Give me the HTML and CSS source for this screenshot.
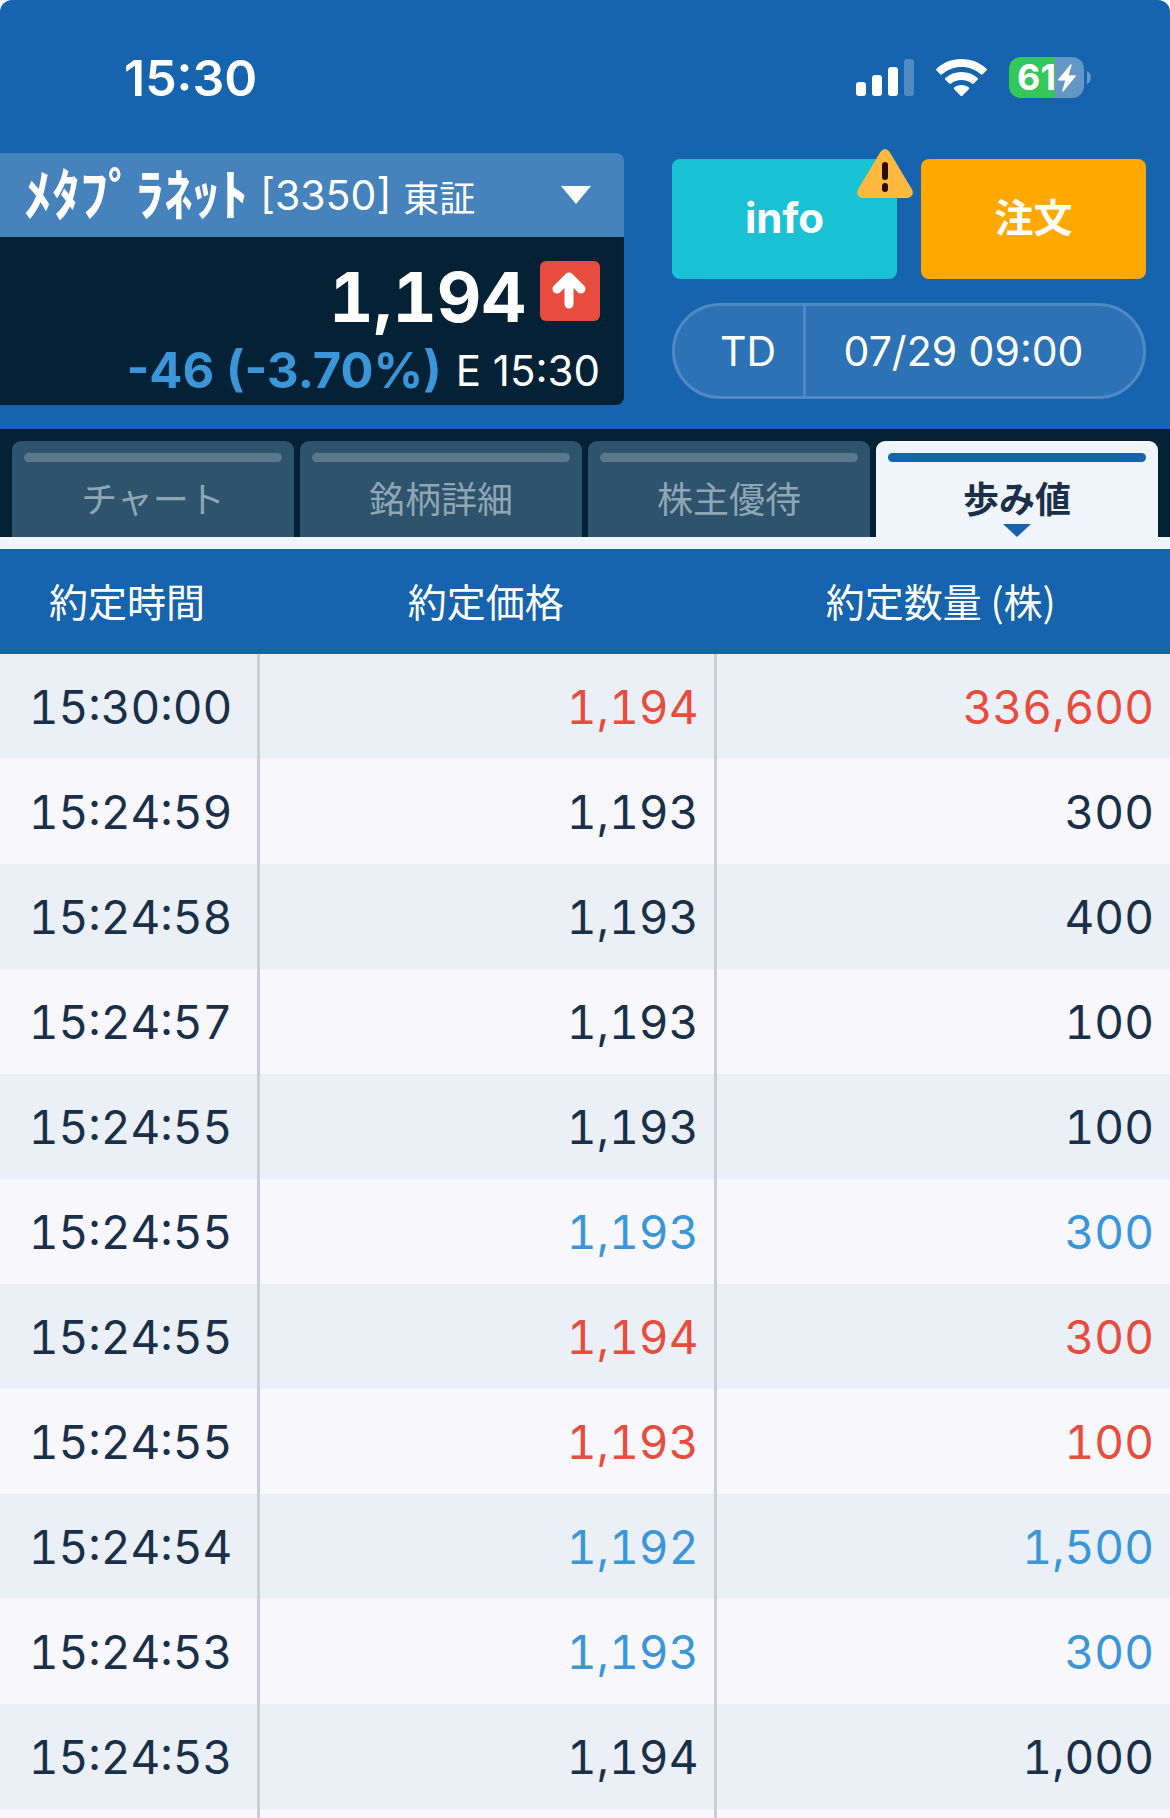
FILE: index.html
```html
<!DOCTYPE html>
<html lang="ja">
<head>
<meta charset="utf-8">
<meta name="viewport" content="width=device-width, initial-scale=1">
<title>歩み値</title>
<link rel="stylesheet" href="styles.css">
</head>
<body>
<div class="app">
  <div class="status">
    <span class="clock">15:30</span>
    <div class="status-icons">
      <svg class="signal" width="58" height="38" viewBox="0 0 58 38" aria-hidden="true">
        <rect x="0" y="23" width="10" height="14" rx="3"/>
        <rect x="16" y="16" width="10" height="21" rx="3"/>
        <rect x="32" y="8" width="10" height="29" rx="3"/>
        <rect x="48" y="0" width="10" height="37" rx="3" opacity=".25"/>
      </svg>
      <svg class="wifi" width="51" height="38" viewBox="0 0 51 38" aria-hidden="true">
        <path d="M25.500 0C35.500 0 44 3.700 50.500 9.700Q51.400 10.600 50.500 11.500L46.700 15.300Q45.900 16.100 45 15.300C39.600 10.600 33 8 25.500 8S11.400 10.600 6 15.300Q5.100 16.100 4.300 15.300L.5 11.500Q-.4 10.600.5 9.700C7 3.700 15.500 0 25.500 0Z"/>
        <path d="M25.500 13C31.800 13 37.400 15.200 41.600 19Q42.500 19.900 41.600 20.800L37.700 24.600Q36.900 25.300 36 24.600C33.200 22.300 29.600 21 25.500 21S17.800 22.300 15 24.600Q14.100 25.300 13.300 24.600L9.400 20.800Q8.500 19.900 9.400 19C13.600 15.200 19.200 13 25.500 13Z"/>
        <path d="M25.500 26C28.400 26 31 27 32.800 28.500Q33.700 29.300 32.800 30.200L26.400 36.700Q25.500 37.500 24.600 36.700L18.200 30.200Q17.300 29.300 18.200 28.500C20 27 22.600 26 25.500 26Z"/>
      </svg>
      <div class="battery">
        <div class="battery-body">
          <span>61</span>
          <svg width="18" height="28" viewBox="0 0 18 28" aria-hidden="true"><path d="M12.500.5 0 15.500Q-.3 16.300.6 16.400H7.300L4.200 26.700Q4.400 28 5.500 27.300L17.800 12.300Q18.200 11.300 17.300 11.200H10.600L13.700 1.200Q13.500-.2 12.500.5Z"/></svg>
        </div>
        <svg width="4" height="13" viewBox="0 0 4 13" aria-hidden="true"><path d="M0 0C5 2 5 11 0 13Z" opacity=".35"/></svg>
      </div>
    </div>
  </div>

  <header class="top">
    <section class="quote">
      <button class="issue" type="button" aria-haspopup="listbox">
        <span class="issue-name">ﾒﾀﾌﾟﾗﾈｯﾄ</span>
        <span class="issue-code">[3350]</span>
        <span class="issue-market">東証</span>
        <svg class="issue-caret" width="30" height="18" viewBox="0 0 30 18" aria-hidden="true"><path d="M0 0H30L15 18Z"/></svg>
      </button>
      <div class="price-box">
        <div class="price-line">
          <strong class="price">1,194</strong>
          <span class="tick"><svg width="36" height="38" viewBox="0 0 36 38" aria-label="上昇"><path d="M17 32V6M5 17 17 5 29 17"/></svg></span>
        </div>
        <div class="change-line">
          <strong class="change">-46 (-3.70%)</strong>
          <span class="price-time">E 15:30</span>
        </div>
      </div>
    </section>
    <section class="actions">
      <div class="buttons">
        <button class="btn btn-info" type="button">info
          <svg class="warn" width="56" height="49" viewBox="0 0 56 49" aria-hidden="true">
            <path class="warn-bg" d="M23.500 2.700Q28-2.600 32.500 2.700L55.300 41Q57.500 47.500 50.500 49H5.500Q-1.500 47.500.7 41Z"/>
            <rect x="25" y="13" width="6" height="18" rx="3"/>
            <rect x="25" y="34" width="6" height="9" rx="3"/>
          </svg>
        </button>
        <button class="btn btn-order" type="button">注文</button>
      </div>
      <button class="session" type="button">
        <span class="session-type">TD</span>
        <span class="session-time">07/29 09:00</span>
      </button>
    </section>
  </header>

  <nav class="tabs">
    <a class="tab" href="#chart">チャート</a>
    <a class="tab" href="#detail">銘柄詳細</a>
    <a class="tab" href="#benefit">株主優待</a>
    <a class="tab tab-active" href="#ticks" aria-current="page">歩み値</a>
  </nav>

  <main class="ticks" id="ticks">
    <table>
      <colgroup><col class="col-time"><col class="col-price"><col class="col-volume"></colgroup>
      <thead>
        <tr><th scope="col">約定時間</th><th scope="col">約定価格</th><th scope="col">約定数量 (株)</th></tr>
      </thead>
      <tbody>
        <tr class="up"><td>15:30:00</td><td>1,194</td><td>336,600</td></tr>
        <tr><td>15:24:59</td><td>1,193</td><td>300</td></tr>
        <tr><td>15:24:58</td><td>1,193</td><td>400</td></tr>
        <tr><td>15:24:57</td><td>1,193</td><td>100</td></tr>
        <tr><td>15:24:55</td><td>1,193</td><td>100</td></tr>
        <tr class="down"><td>15:24:55</td><td>1,193</td><td>300</td></tr>
        <tr class="up"><td>15:24:55</td><td>1,194</td><td>300</td></tr>
        <tr class="up"><td>15:24:55</td><td>1,193</td><td>100</td></tr>
        <tr class="down"><td>15:24:54</td><td>1,192</td><td>1,500</td></tr>
        <tr class="down"><td>15:24:53</td><td>1,193</td><td>300</td></tr>
        <tr><td>15:24:53</td><td>1,194</td><td>1,000</td></tr>
        <tr><td></td><td></td><td></td></tr>
      </tbody>
    </table>
  </main>
</div>
</body>
</html>
```
FILE: styles.css
```css
:root {
  --blue: #1664ad;
  --navy: #042135;
  --ink: #1a3048;
  --up: #e74c3c;
  --down: #3a96d8;
  --pale: #f0f5fc;
}

* { box-sizing: border-box; }

body {
  margin: 0;
  background: #fff;
  color: var(--ink);
  font-family: Inter, "Noto Sans CJK JP", sans-serif;
}

button {
  margin: 0;
  padding: 0;
  border: 0;
  color: #fff;
  font: inherit;
  cursor: pointer;
}

svg { display: block; flex: none; }

.app {
  display: flex;
  flex-direction: column;
  height: 100vh;
  overflow: hidden;
  border-radius: 12px 12px 0 0;
  background: var(--pale);
}

/* Status bar */
.status {
  display: flex;
  flex: none;
  align-items: center;
  justify-content: space-between;
  height: 153px;
  padding: 2px 79px 0 124px;
  background: var(--blue);
  color: #fff;
}

.clock { font-size: 50px; font-weight: 600; }

.status-icons { display: flex; align-items: center; gap: 22px; }
.status-icons svg { fill: #fff; }

.battery { display: flex; align-items: center; gap: 3px; }

.battery-body {
  display: flex;
  align-items: center;
  justify-content: center;
  gap: 2px;
  width: 75px;
  height: 41px;
  border-radius: 12px;
  background: linear-gradient(90deg, #34c759 62%, #6496c8 62%);
  font-size: 36px;
  font-weight: 700;
  line-height: 41px;
}

/* Quote header */
.top {
  display: flex;
  flex: none;
  gap: 48px;
  padding: 0 24px 24px 0;
  background: var(--blue);
}

.quote {
  flex: 624;
  overflow: hidden;
  border-radius: 0 8px 8px 0;
  color: #fff;
}

.issue {
  display: flex;
  align-items: center;
  gap: 12px;
  width: 100%;
  height: 84px;
  padding: 0 33px 0 24px;
  background: #4682bb;
  white-space: nowrap;
}

.issue-name { font-size: 56px; font-weight: 700; line-height: 84px; }
.issue-code { font-size: 41px; }
.issue-market { padding-top: 8px; font-size: 36px; line-height: 76px; }
.issue-caret { margin-left: auto; fill: #fff; }

.price-box {
  height: 168px;
  padding: 24px 24px 0;
  background: var(--navy);
}

.price-line,
.change-line {
  display: flex;
  justify-content: flex-end;
  gap: 14px;
}

.price-line { align-items: center; height: 60px; }

.price {
  padding-top: 12px;
  font-size: 69px;
  font-weight: 700;
  font-variant-numeric: tabular-nums;
  line-height: 72px;
}

.tick {
  display: grid;
  place-items: center;
  width: 60px;
  height: 60px;
  border-radius: 6px;
  background: var(--up);
}

.tick svg {
  fill: none;
  stroke: #fff;
  stroke-width: 9px;
  stroke-linecap: round;
  stroke-linejoin: round;
}

.change-line {
  align-items: center;
  padding-top: 12px;
  line-height: 76px;
}

.change { color: var(--down); font-size: 49px; font-weight: 700; }
.price-time { font-size: 42px; }

.actions {
  display: flex;
  flex: 474;
  flex-direction: column;
  gap: 24px;
  padding-top: 6px;
}

.buttons { display: flex; gap: 24px; }

.btn {
  position: relative;
  flex: 1;
  height: 120px;
  padding-bottom: 3px;
  border-radius: 8px;
}

.btn-info { background: #1ac2d6; font-size: 42px; font-weight: 700; }
.btn-order { background: #ffa900; font-size: 39px; font-weight: 700; line-height: 48px; }

.warn { position: absolute; top: -10px; right: -16px; fill: #2b0d05; }
.warn-bg { fill: #ffb941; }

.session {
  display: flex;
  height: 96px;
  border: 3px solid #5089c3;
  border-radius: 48px;
  background: #2d72b4;
  font-size: 41px;
  line-height: 90px;
}

.session-type {
  flex: none;
  width: 28%;
  padding-left: 18px;
  border-right: 3px solid #5089c3;
}

.session-time { flex: 1; padding-right: 22px; }

/* Tabs */
.tabs {
  display: flex;
  flex: none;
  gap: 6px;
  padding: 12px 12px 0;
  border-bottom: 12px solid var(--pale);
  background: var(--navy);
}

.tab {
  position: relative;
  flex: 1;
  height: 96px;
  padding: 12px 12px 0;
  border-radius: 9px 9px 0 0;
  background: #2d546c;
  color: #8fa6b4;
  font-size: 36px;
  line-height: 77px;
  text-align: center;
  text-decoration: none;
}

.tab::before {
  content: "";
  display: block;
  height: 9px;
  border-radius: 5px;
  background: #5a788c;
}

.tab-active { background: var(--pale); color: var(--ink); font-weight: 700; }
.tab-active::before { background: var(--blue); }

.tab-active::after {
  content: "";
  position: absolute;
  bottom: 0;
  left: 50%;
  margin-left: -14px;
  border: 14px solid transparent;
  border-top: 13px solid var(--blue);
  border-bottom: 0;
}

/* Tick list */
.ticks { flex: 1; min-height: 0; overflow: hidden; }

table { width: 100%; border-collapse: separate; border-spacing: 0; table-layout: fixed; }
.col-time { width: 260px; }
.col-price { width: 39.1%; }

tr { height: 105px; }

th {
  padding: 0 6px 4px 0;
  background: var(--blue);
  color: #fff;
  font-family: "Noto Sans CJK JP", sans-serif;
  font-size: 39px;
  font-weight: 400;
  line-height: 48px;
}

td {
  padding: 0 16px 0 0;
  border-right: 3px solid #ccced6;
  font-size: 46px;
  font-variant-numeric: tabular-nums;
  text-align: right;
}

td:first-child { padding: 0 0 0 4px; color: var(--ink); text-align: center; }
td:last-child { border-right: 0; }

tbody tr:nth-child(odd) { background: #ebf0f7; }
tbody tr:nth-child(even) { background: #f8f7fc; }

.up { color: var(--up); }
.down { color: var(--down); }
```
